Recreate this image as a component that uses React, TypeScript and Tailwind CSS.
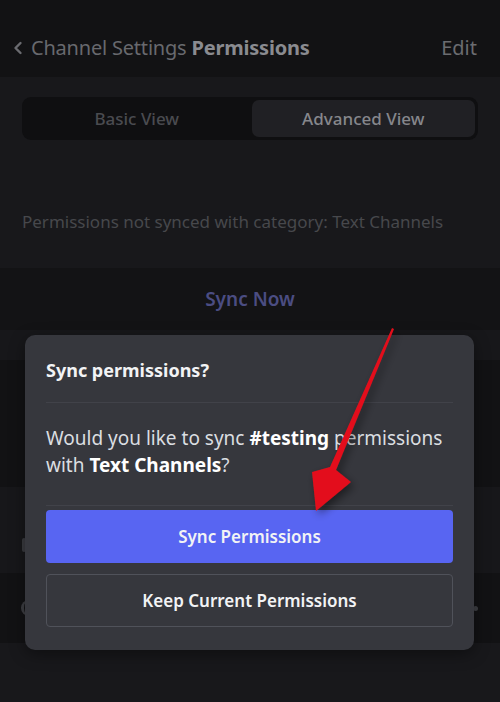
import React from "react";

export default function App() {
  return (
    <div
      className="relative w-[500px] h-[702px] overflow-hidden bg-[#18181b]"
      style={{ fontFamily: '"Noto Sans", "Open Sans", sans-serif' }}
    >
      {/* Header */}
      <div className="h-[77px] bg-[#121214] flex items-center justify-between pl-[10px] pr-[23px] pt-[18px]">
        <div className="flex items-center gap-[5px]">
          <svg width="16" height="16" viewBox="0 0 16 16" className="text-[#6a6b70]">
            <path d="M10.5 3 L5.5 8 L10.5 13" fill="none" stroke="currentColor" strokeWidth="2.4" strokeLinecap="round" strokeLinejoin="round" />
          </svg>
          <span className="text-[20px] text-[#68696e] tracking-[-0.2px]">Channel Settings</span>
          <span className="text-[20px] font-bold text-[#8a8b90] tracking-[-0.2px]">Permissions</span>
        </div>
        <span className="text-[20px] text-[#6b6c70]">Edit</span>
      </div>

      {/* Tabs */}
      <div className="px-[22px] pt-[20px]">
        <div className="h-[43px] rounded-[9px] bg-[#0f0f11] flex p-[3px]">
          <div className="flex-1 flex items-center justify-center text-[17px] text-[#4a4b50] font-medium">Basic View</div>
          <div className="flex-1 ml-[3px] flex items-center justify-center rounded-[7px] bg-[#202024] text-[17px] text-[#86878c] font-medium">Advanced View</div>
        </div>
      </div>

      {/* Notice */}
      <div className="pt-[69px] pl-[22px] h-[128px] text-[17px] text-[#47484c]">
        Permissions not synced with category: Text Channels
      </div>

      {/* Sync now row */}
      <div className="h-[62px] bg-[#131315] flex items-center justify-center text-[19px] font-semibold text-[#4b4d82]">
        Sync Now
      </div>
      <div className="h-[30px] bg-[#17171a]" />
      <div className="h-[127px] bg-[#121214]" />
      <div className="h-[86px] bg-[#17171a] flex items-center pl-[22px] pt-[30px]">
        <div className="w-[4px] h-[14px] rounded-sm bg-[#3a3b40]" />
      </div>
      <div className="h-[70px] bg-[#121214] flex items-center justify-between pl-[21px] pr-[22px]">
        <div className="w-[8px] h-[16px] rounded-l-full border-l-[3px] border-[#3e3f44]" />
        <div className="w-[5px] h-[5px] rounded-full bg-[#3e3f44]" />
      </div>

      {/* Modal */}
      <div className="absolute left-[25px] top-[335px] w-[449px] h-[315px] rounded-[10px] bg-[#36373d] px-[21px] shadow-[0_4px_16px_rgba(0,0,0,0.4)]">
        <div className="h-[68px] flex items-center pt-[4px] text-[18px] font-bold text-[#f2f3f5] border-b border-[#414249]">
          Sync permissions?
        </div>
        <div className="pt-[22px] text-[19px] leading-[27px] text-[#dbdee1] h-[103px] border-b border-[#414249]">
          Would you like to sync <span className="font-bold text-white">#testing</span> permissions with{" "}
          <span className="font-bold text-white">Text Channels</span>?
        </div>
        <div className="pt-[4px] flex flex-col gap-[11px]">
          <div className="h-[53px] rounded-[4px] bg-[#5865f2] flex items-center justify-center text-[17px] font-semibold text-[#f2f3f5]">
            Sync Permissions
          </div>
          <div className="h-[53px] rounded-[4px] border border-[#50525a] flex items-center justify-center text-[17px] font-semibold text-[#f2f3f5]">
            Keep Current Permissions
          </div>
        </div>
      </div>

      {/* Red annotation arrow */}
      <svg className="absolute left-0 top-0" width="500" height="702" viewBox="0 0 500 702">
        <defs>
          <filter id="sh" x="-50%" y="-50%" width="200%" height="200%">
            <feDropShadow dx="3" dy="4" stdDeviation="4" floodColor="#000" floodOpacity="0.45" />
          </filter>
        </defs>
        <polygon
          points="316,511 312,472 330,467 392,328 394,329 336,470 351,482"
          fill="#e3101a"
          filter="url(#sh)"
        />
      </svg>
    </div>
  );
}
